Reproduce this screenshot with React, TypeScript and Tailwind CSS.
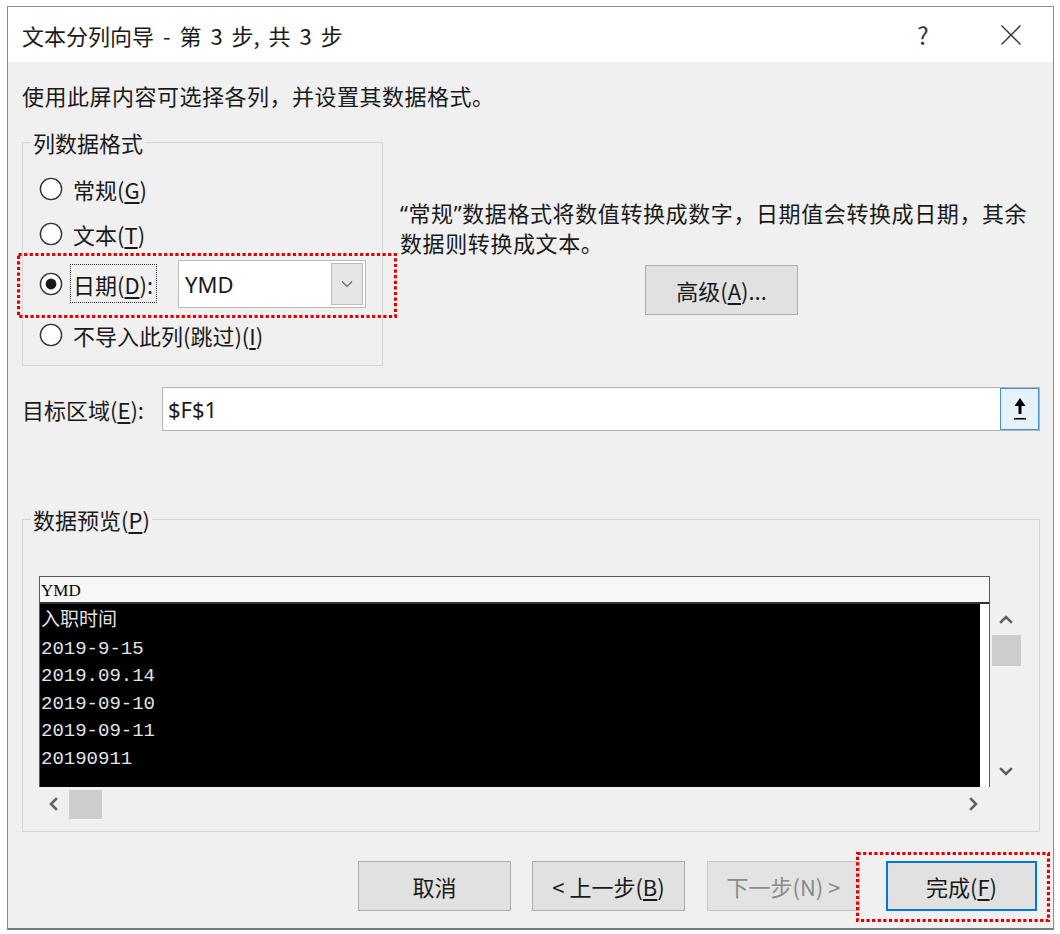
import React from "react";

const FONT = "font-['Noto_Sans_CJK_SC','Noto_Sans',sans-serif]";

function Radio({ checked }: { checked?: boolean }) {
  return (
    <svg width="24" height="24" viewBox="0 0 24 24" className="shrink-0">
      <circle cx="12" cy="12" r="10.6" fill="#ffffff" stroke="#333333" strokeWidth="1.4" />
      {checked && <circle cx="12" cy="12" r="5.4" fill="#1a1a1a" />}
    </svg>
  );
}

function Chevron({ dir }: { dir: "up" | "down" | "left" | "right" }) {
  const pts: Record<string, string> = {
    up: "2,9 7,4 12,9",
    down: "2,4 7,9 12,4",
    left: "9,2 4,7 9,12",
    right: "4,2 9,7 4,12",
  };
  return (
    <svg width="14" height="14" viewBox="0 0 14 14">
      <polyline points={pts[dir]} fill="none" stroke="#606060" strokeWidth="2.6" strokeLinecap="square" />
    </svg>
  );
}

function RedBox({ className }: { className: string }) {
  return (
    <div className={"absolute pointer-events-none " + className}>
      <svg width="100%" height="100%">
        <rect
          x="1.5"
          y="1.5"
          width="calc(100% - 3px)"
          height="calc(100% - 3px)"
          fill="none"
          stroke="#e30000"
          strokeWidth="3.2"
          strokeDasharray="3.2 2.4"
        />
      </svg>
    </div>
  );
}

export default function App() {
  const rows = ["入职时间", "2019-9-15", "2019.09.14", "2019-09-10", "2019-09-11", "20190911"];
  return (
    <div className={"relative w-[1060px] h-[934px] bg-white pt-[6px] pl-[7px] text-[#1a1a1a] " + FONT}>
      <div className="w-[1047px] h-[924px] border border-[#8c8c8c] border-b-2 border-b-[#7a7a7a] bg-[#f0f0f0] flex flex-col">
        {/* Title bar */}
        <div className="h-[55px] shrink-0 bg-white flex items-center pl-[14px]">
          <span className="text-[22px] leading-[30px] whitespace-pre [word-spacing:4px]">文本分列向导 - 第 3 步, 共 3 步</span>
          <span className="ml-auto w-[46px] text-center text-[24px] leading-[30px] text-[#333]">?</span>
          <span className="ml-[42px] mr-[19px] w-[46px] flex justify-center">
            <svg width="22" height="22" viewBox="0 0 22 22">
              <line x1="1.5" y1="1.5" x2="20.5" y2="20.5" stroke="#333" strokeWidth="1.3" />
              <line x1="20.5" y1="1.5" x2="1.5" y2="20.5" stroke="#333" strokeWidth="1.3" />
            </svg>
          </span>
        </div>

        {/* Body */}
        <div className="flex flex-col pl-[14px] pr-[13px]">
          <div className="mt-[18px] text-[22px] leading-[30px] tracking-[0.5px]">使用此屏内容可选择各列，并设置其数据格式。</div>

          <div className="flex items-start mt-[18px]">
            <fieldset className="w-[361px] h-[238px] shrink-0 border border-[#d6d6d6]">
              <legend className="ml-[8px] px-[2px] text-[22px] leading-[28px]">列数据格式</legend>
              <div className="flex flex-col pl-[16px] text-[22px]">
                <div className="mt-[13px] h-[40px] flex items-center gap-[10px]">
                  <Radio />
                  <span className="leading-[28px]">
                    常规(<u className="underline-offset-[3px]">G</u>)
                  </span>
                </div>
                <div className="mt-[5px] h-[40px] flex items-center gap-[10px]">
                  <Radio />
                  <span className="leading-[28px]">
                    文本(<u className="underline-offset-[3px]">T</u>)
                  </span>
                </div>
                <div className="mt-[5px] h-[49px] flex items-center gap-[7px]">
                  <Radio checked />
                  <span className="w-[87px] h-[39px] border border-dotted border-[#333] pl-[2px] flex items-center leading-[28px] whitespace-nowrap">
                    日期(<u className="underline-offset-[3px]">D</u>):
                  </span>
                  <div className="ml-[14px] w-[188px] h-[48px] bg-white border border-[#b9b9b9] flex items-center pl-[6px] pr-[2px]">
                    <span className="text-[22px] leading-[28px] font-['Noto_Sans','Noto_Sans_CJK_SC',sans-serif]">YMD</span>
                    <div className="ml-auto w-[32px] h-[42px] bg-[#e5e5e5] border border-[#bdbdbd] flex items-center justify-center">
                      <svg width="12" height="8" viewBox="0 0 12 8">
                        <polyline points="1,1.5 6,6.5 11,1.5" fill="none" stroke="#606060" strokeWidth="1.1" />
                      </svg>
                    </div>
                  </div>
                </div>
                <div className="mt-[7px] h-[40px] flex items-center gap-[10px]">
                  <Radio />
                  <span className="leading-[28px] whitespace-nowrap">
                    不导入此列(跳过)(<u className="underline-offset-[3px]">I</u>)
                  </span>
                </div>
              </div>
            </fieldset>

            <div className="ml-[17px] flex-1 flex flex-col mt-[70px]">
              <div className="text-[22px] leading-[29px] whitespace-nowrap tracking-[0.6px]">
                <span className="font-['Noto_Sans',sans-serif]">“</span>常规<span className="font-['Noto_Sans',sans-serif]">”</span>数据格式将数值转换成数字，日期值会转换成日期，其余
                <br />
                数据则转换成文本。
              </div>
              <button className="self-center ml-[3px] mt-[8px] w-[153px] h-[50px] border border-[#adadad] bg-[#e1e1e1] text-[22px] leading-[28px]">
                高级(<u className="underline-offset-[3px]">A</u>)...
              </button>
            </div>
          </div>

          {/* Target */}
          <div className="flex items-center mt-[21px] h-[44px]">
            <span className="w-[140px] text-[22px] leading-[28px] whitespace-nowrap">
              目标区域(<u className="underline-offset-[3px]">E</u>):
            </span>
            <div className="flex-1 h-[44px] bg-white border border-[#b4b4b4] flex items-center">
              <span className="pl-[5px] text-[22px] leading-[28px] font-['Noto_Sans','Noto_Sans_CJK_SC',sans-serif]">$F$1</span>
              <div className="ml-auto w-[39px] h-[42px] border border-[#4a90d9] bg-[#e5f1fb] flex items-center justify-center">
                <svg width="14" height="26" viewBox="0 0 14 26">
                  <polygon points="7,2 1.5,10 12.5,10" fill="#000" />
                  <rect x="5.5" y="9" width="3" height="9" fill="#000" />
                  <rect x="1" y="22" width="12" height="1.5" fill="#000" />
                </svg>
              </div>
            </div>
          </div>

          {/* Data preview */}
          <fieldset className="mt-[74px] w-[1018px] h-[327px] border border-[#d6d6d6]">
            <legend className="ml-[8px] px-[2px] text-[22px] leading-[28px]">
              数据预览(<u className="underline-offset-[3px]">P</u>)
            </legend>
            <div className="pl-[16px] mt-[43px] flex flex-col">
              <div className="flex">
                <div className="w-[951px] h-[211px] border-t border-l border-r border-[#5a5a5a] flex flex-col">
                  <div className="h-[27px] shrink-0 bg-[#f7f7f7] border-b-2 border-[#333] pl-[1px] pt-[1px] text-[17px] leading-[25px] text-black font-['Liberation_Serif',serif]">
                    YMD
                  </div>
                  <div className="flex-1 flex">
                    <div className="flex-1 bg-black pl-[1px] pt-[4px] text-[19px] leading-[27.6px] text-[#e4e4e4] font-['Liberation_Mono','Noto_Sans_CJK_SC',monospace]">
                      {rows.map((r) => (
                        <div key={r}>{r}</div>
                      ))}
                    </div>
                    <div className="w-[9px] bg-white" />
                  </div>
                </div>
                <div className="w-[32px] h-[211px] pt-[28px] flex flex-col">
                  <div className="h-[31px] flex items-center justify-center">
                    <Chevron dir="up" />
                  </div>
                  <div className="ml-[2px] w-[29px] h-[31px] bg-[#cdcdcd]" />
                  <div className="flex-1" />
                  <div className="h-[31px] flex items-center justify-center">
                    <Chevron dir="down" />
                  </div>
                </div>
              </div>
              <div className="w-[951px] h-[34px] flex items-center">
                <div className="w-[30px] h-full flex items-center justify-center">
                  <Chevron dir="left" />
                </div>
                <div className="w-[33px] h-[29px] bg-[#cdcdcd]" />
                <div className="flex-1" />
                <div className="w-[32px] h-full flex items-center justify-center">
                  <Chevron dir="right" />
                </div>
              </div>
            </div>
          </fieldset>

          {/* Buttons */}
          <div className="mt-[29px] flex justify-end pr-[3px] text-[22px] leading-[28px]">
            <button className="w-[153px] h-[50px] border border-[#adadad] bg-[#e1e1e1]">取消</button>
            <button className="ml-[21px] w-[153px] h-[50px] border border-[#adadad] bg-[#e1e1e1]">
              &lt; 上一步(<u className="underline-offset-[3px]">B</u>)
            </button>
            <button className="ml-[22px] w-[153px] h-[50px] border border-[#c6c6c6] bg-[#e3e3e3] text-[#8a8a8a]">
              下一步(N) &gt;
            </button>
            <button className="ml-[26px] w-[151px] h-[50px] border-2 border-[#0078d7] bg-[#e1e1e1]">
              完成(<u className="underline-offset-[3px]">F</u>)
            </button>
          </div>
        </div>
      </div>

      <RedBox className="left-[17px] top-[253px] w-[380px] h-[65px]" />
      <RedBox className="left-[856px] top-[852px] w-[194px] h-[70px]" />
    </div>
  );
}
